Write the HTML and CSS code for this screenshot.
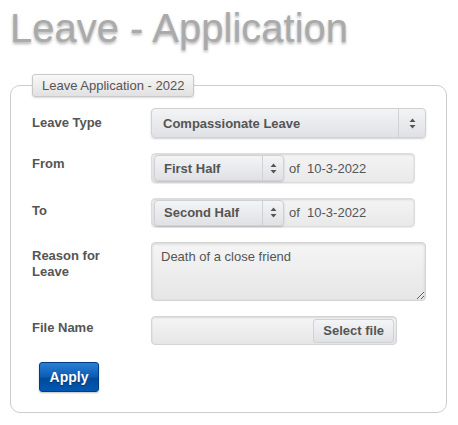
FILE: index.html
```html
<!DOCTYPE html>
<html lang="en">
<head>
  <meta charset="UTF-8">
  <title>Leave - Application</title>
  <link rel="stylesheet" href="styles.css">
</head>
<body>

  <h1 class="page-title">Leave - Application</h1>

  <fieldset class="leave-box">
    <legend>Leave Application - 2022</legend>

    <div class="form-grid">
      <label class="field-label">Leave Type</label>
      <div class="select select-wide">
        <span class="select-text">Compassionate Leave</span>
        <span class="select-arrow">
          <svg width="7" height="11" viewBox="0 0 7 11"><path d="M3.5 0.5 L6.5 4 H0.5 Z M3.5 10.5 L6.5 7 H0.5 Z" fill="#555"/></svg>
        </span>
      </div>

      <label class="field-label label-from">From</label>
      <div class="date-box">
        <div class="select select-half">
          <span class="select-text">First Half</span>
          <span class="select-arrow">
            <svg width="7" height="11" viewBox="0 0 7 11"><path d="M3.5 0.5 L6.5 4 H0.5 Z M3.5 10.5 L6.5 7 H0.5 Z" fill="#555"/></svg>
          </span>
        </div>
        <span class="date-text">of&nbsp; 10-3-2022</span>
      </div>

      <label class="field-label label-to">To</label>
      <div class="date-box date-box-to">
        <div class="select select-half">
          <span class="select-text">Second Half</span>
          <span class="select-arrow">
            <svg width="7" height="11" viewBox="0 0 7 11"><path d="M3.5 0.5 L6.5 4 H0.5 Z M3.5 10.5 L6.5 7 H0.5 Z" fill="#555"/></svg>
          </span>
        </div>
        <span class="date-text">of&nbsp; 10-3-2022</span>
      </div>

      <label class="field-label label-reason">Reason for<br>Leave</label>
      <textarea class="reason">Death of a close friend</textarea>

      <label class="field-label label-file">File Name</label>
      <div class="file-box">
        <span class="file-button">Select file</span>
      </div>
    </div>

    <button class="apply-btn">Apply</button>
  </fieldset>

</body>
</html>
```

FILE: styles.css
```css
body {
  margin: 0;
  font-family: "Liberation Sans", Arial, sans-serif;
  color: #555;
}
.page-title {
  margin: 5px 0 0 10px;
  font-size: 40px;
  line-height: 46px;
  font-weight: normal;
  color: #aaa;
  text-shadow: 0 2px 3px rgba(0, 0, 0, 0.3);
}
.leave-box {
  margin: 23px 11px 0 10px;
  border: 1px solid #ccc;
  border-radius: 10px;
  padding: 11px 20px 20px 21px;
}
.leave-box legend {
  padding: 0 9px;
  font-size: 13px;
  line-height: 21px;
  color: #555;
  border: 1px solid #c8c8c8;
  border-radius: 3px;
  background: linear-gradient(#f8f8f8, #e1e1e1);
  box-shadow: 0 1px 2px rgba(0, 0, 0, 0.15);
}
.form-grid {
  display: grid;
  grid-template-columns: 119px auto;
  row-gap: 15px;
  align-items: start;
}
.field-label {
  font-size: 13px;
  font-weight: bold;
  line-height: 16px;
  padding-top: 7px;
  color: #555;
}
.label-from {
  padding-top: 3px;
}
.label-to {
  padding-top: 5px;
}
.label-reason {
  padding-top: 6px;
}
.label-file {
  padding-top: 4px;
}
.select {
  display: flex;
  align-items: stretch;
  box-sizing: border-box;
  border: 1px solid #cfd1d5;
  border-radius: 4px;
  background: linear-gradient(#f3f4f6, #dfe1e4);
  box-shadow: 0 1px 2px rgba(0, 0, 0, 0.18);
  font-size: 13px;
  font-weight: bold;
  color: #555;
}
.select-text {
  flex: 1;
  display: flex;
  align-items: center;
  padding-left: 11px;
}
.select-arrow {
  width: 26px;
  display: flex;
  align-items: center;
  justify-content: center;
  border-left: 1px solid #cfd1d5;
}
.select-wide {
  width: 275px;
  height: 30px;
}
.date-box {
  width: 264px;
  height: 30px;
  box-sizing: border-box;
  display: flex;
  align-items: center;
  gap: 5px;
  padding-left: 2px;
  border: 1px solid #dcdcdc;
  border-radius: 4px;
  background: linear-gradient(#f4f4f4, #e9e9e9);
  box-shadow: inset 0 1px 2px rgba(0, 0, 0, 0.12), 0 1px 1px rgba(0, 0, 0, 0.08);
}
.date-box-to {
  height: 29px;
}
.select-half {
  width: 130px;
  height: 26px;
}
.select-half .select-arrow {
  width: 20px;
}
.select-half .select-text {
  padding-left: 9px;
}
.date-text {
  font-size: 13px;
  color: #555;
}
.reason {
  width: 275px;
  height: 59px;
  box-sizing: border-box;
  margin: 0;
  padding: 6px 9px;
  font-family: "Liberation Sans", Arial, sans-serif;
  font-size: 13px;
  color: #555;
  border: 1px solid #d4d4d4;
  border-radius: 4px;
  background: linear-gradient(#f5f5f5, #e6e6e6);
  box-shadow: inset 0 1px 3px rgba(0, 0, 0, 0.15);
  resize: vertical;
  display: block;
}
.file-box {
  width: 246px;
  height: 29px;
  box-sizing: border-box;
  display: flex;
  justify-content: flex-end;
  align-items: center;
  padding-right: 2px;
  border: 1px solid #d4d4d4;
  border-radius: 4px;
  background: linear-gradient(#f5f5f5, #e6e6e6);
  box-shadow: inset 0 1px 2px rgba(0, 0, 0, 0.12);
}
.file-button {
  height: 24px;
  box-sizing: border-box;
  display: flex;
  align-items: center;
  padding: 0 9px;
  font-size: 13px;
  font-weight: bold;
  color: #555;
  border: 1px solid #cfd1d5;
  border-radius: 3px;
  background: linear-gradient(#f4f5f7, #dfe1e4);
}
.apply-btn {
  display: block;
  margin: 17px 0 0 7px;
  width: 60px;
  height: 30px;
  font-family: "Liberation Sans", Arial, sans-serif;
  font-size: 14px;
  font-weight: bold;
  color: #fff;
  text-shadow: 0 1px 1px rgba(0, 0, 0, 0.4);
  border: 1px solid #003d84;
  border-radius: 3px;
  background: linear-gradient(#2a7fd4 0%, #0a5cb3 50%, #004a9c 55%, #0058b0 100%);
  box-shadow: 0 1px 2px rgba(0, 0, 0, 0.25);
  cursor: pointer;
}
```
